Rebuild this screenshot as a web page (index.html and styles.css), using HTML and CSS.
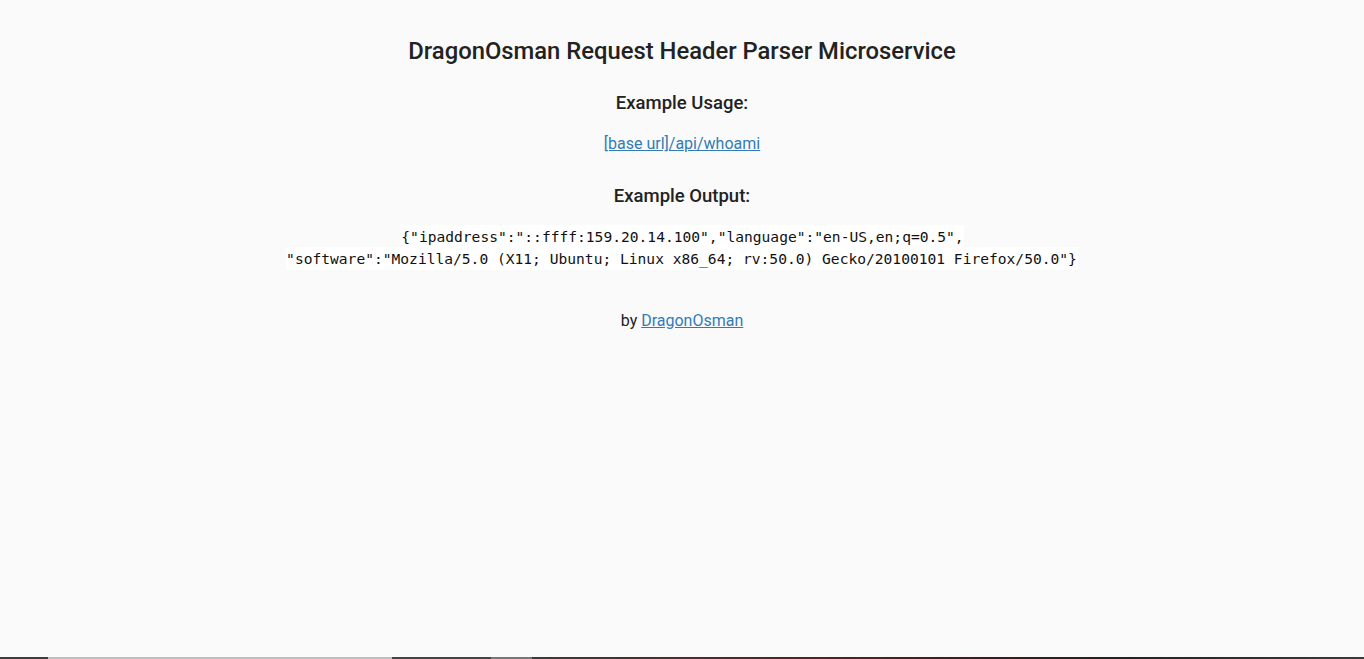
FILE: index.html
```html
<!DOCTYPE html>
<html lang="en">
<head>
<meta charset="utf-8">
<title>DragonOsman Request Header Parser Microservice</title>
<link rel="stylesheet" href="styles.css">
</head>
<body>
<main class="page">
  <h1 class="title">DragonOsman Request Header Parser Microservice</h1>
  <h3 class="subtitle">Example Usage:</h3>
  <p class="usage"><a class="link" href="#">[base url]/api/whoami</a></p>
  <h3 class="subtitle">Example Output:</h3>
  <p class="output"><code class="code">{"ipaddress":"::ffff:159.20.14.100","language":"en-US,en;q=0.5",<br>"software":"Mozilla/5.0 (X11; Ubuntu; Linux x86_64; rv:50.0) Gecko/20100101 Firefox/50.0"}</code></p>
  <p class="footer">by <a class="link" href="#">DragonOsman</a></p>
</main>
<div class="taskbar">
  <span class="seg seg-a"></span><span class="seg seg-b"></span><span class="seg seg-c"></span><span class="seg seg-d"></span><span class="seg seg-e"></span>
</div>
</body>
</html>
```
FILE: styles.css
```css
html, body {
  margin: 0;
  padding: 0;
  background: #fafafa;
  height: 100%;
}
body {
  font-family: Roboto, "Liberation Sans", sans-serif;
  color: #222;
  font-size: 16px;
}
.page {
  display: flex;
  flex-direction: column;
  align-items: center;
  padding-top: 36px;
  text-align: center;
}
.title {
  font-size: 23.8px;
  font-weight: 500;
  margin: 0 0 25px;
  line-height: 30px;
}
.subtitle {
  font-size: 18.5px;
  font-weight: 500;
  margin: 0;
  line-height: 24px;
}
.usage {
  margin: 19px 0 30px;
  line-height: 20px;
}
.link {
  color: #337ab7;
  text-decoration: underline;
}
.output {
  margin: 18px 0 0;
  line-height: 22px;
}
.code {
  font-family: "DejaVu Sans Mono", "Liberation Mono", monospace;
  font-size: 14.6px;
  background: #fff;
  color: #111;
  padding: 3px 1px;
}
.footer {
  margin: 41px 0 0;
  line-height: 20px;
}
.taskbar {
  position: fixed;
  left: 0;
  right: 0;
  bottom: 0;
  height: 2px;
  display: flex;
}
.seg { height: 2px; }
.seg-a { width: 48px; background: #3c3c3c; }
.seg-b { width: 344px; background: #bdbdbd; }
.seg-c { width: 99px; background: #444; }
.seg-d { width: 41px; background: #777; }
.seg-e { flex: 1; background: linear-gradient(90deg, #3a3a3a 0%, #5a1e24 35%, #3a1c1e 55%, #222 70%, #3a3a3a 100%); }
```
